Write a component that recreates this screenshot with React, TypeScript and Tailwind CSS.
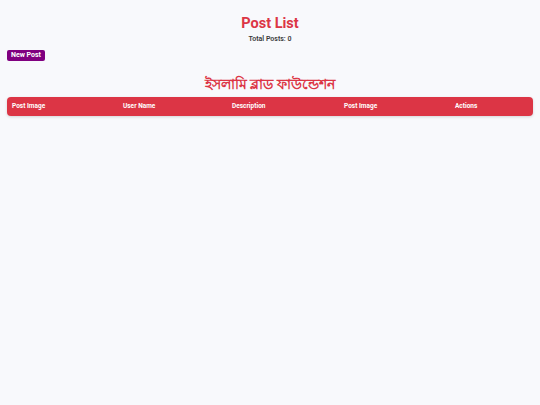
export default function App() {
  const cols = ["Post Image", "User Name", "Description", "Post Image", "Actions"];
  return (
    <div className="min-h-[405px] w-full bg-[#f8f9fc] px-[7px] pt-[15px]" style={{ fontFamily: "Roboto, 'Noto Sans', sans-serif" }}>
      <h1 className="text-center text-[14.5px] font-bold leading-[18px] text-[#dc3545]">Post List</h1>
      <p className="mt-[2px] text-center text-[7px] font-semibold leading-[9px] text-[#3a3a3a]">Total Posts: 0</p>
      <div className="mt-[6px] flex">
        <button className="rounded-[2px] bg-[#800080] px-[4px] py-[2px] text-[7px] font-bold leading-[7px] text-white">New Post</button>
      </div>
      <h2 className="mt-[11px] text-center text-[14px] font-semibold leading-[24px] text-[#dc3545]">ইসলামি ব্লাড ফাউন্ডেশন</h2>
      <div className="mt-[1px] grid grid-cols-[111px_109px_112px_111px_1fr] rounded-[4px] bg-[#dc3545] shadow-[0_1px_3px_rgba(0,0,0,0.15)]">
        {cols.map((c, i) => (
          <div key={i} className="px-[5px] py-[6px] text-[6.5px] font-bold leading-[7px] text-white">{c}</div>
        ))}
      </div>
    </div>
  );
}
